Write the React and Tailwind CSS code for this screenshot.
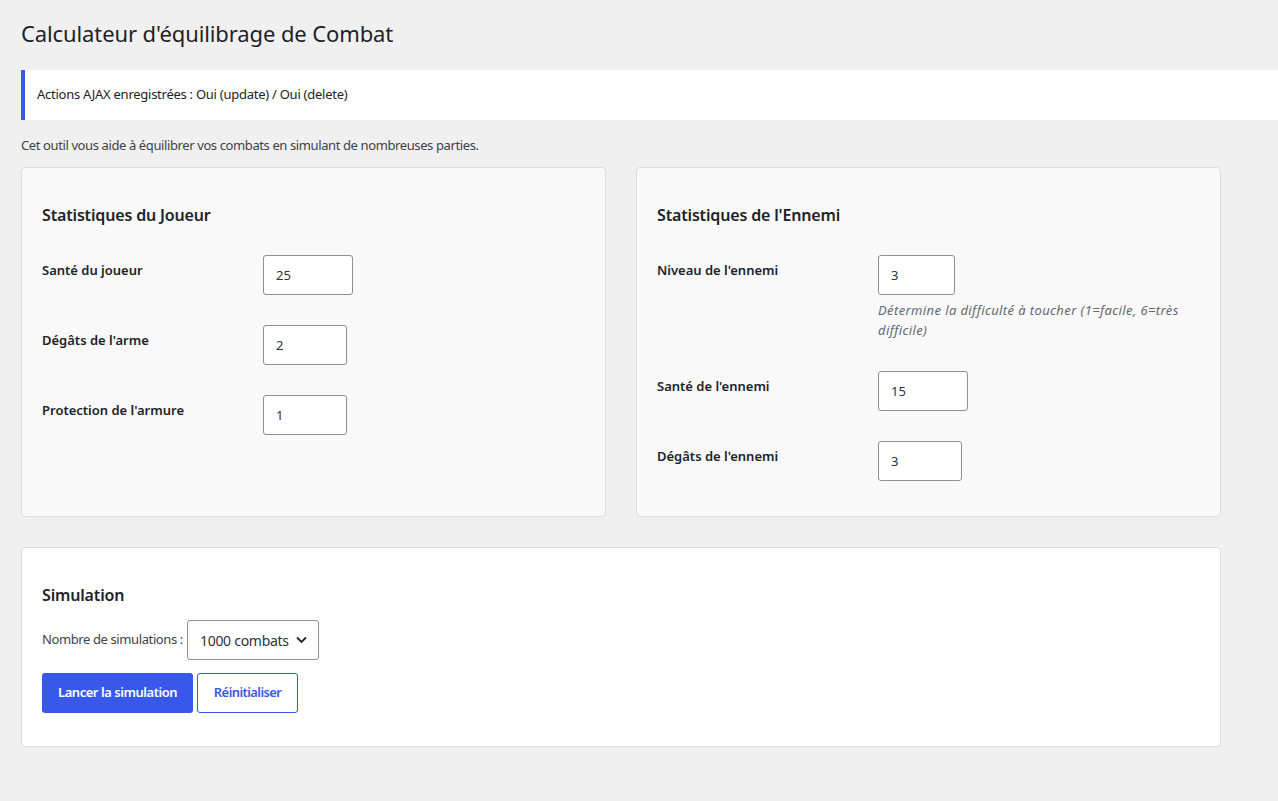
import React, { useState } from "react";

// Calculateur d'équilibrage — admin page (WP look)

const font = { fontFamily: '"Noto Sans", "Open Sans", sans-serif' };

function Field({ label, value, width, help }) {
  return (
    <div className="flex items-start">
      <div className="w-[221px] shrink-0 pt-[5px] text-[13px] leading-[20px] font-semibold text-[#1d2327]">
        {label}
      </div>
      <div>
        <input
          type="text"
          defaultValue={value}
          className={`h-[40px] ${width} rounded-[3px] border border-[#8c8f94] bg-white px-[12px] text-[13px] text-[#2c3338] outline-none`}
        />
        {help ? (
          <p className="mt-[5px] mb-[1px] max-w-[320px] text-[13px] leading-[20px] italic tracking-[0.03em] text-[#646970]">
            {help}
          </p>
        ) : null}
      </div>
    </div>
  );
}

export default function App() {
  const [count, setCount] = useState("1000");

  return (
    <div className="min-h-screen bg-[#f0f0f1] text-[#3c434a]" style={font}>
      <div className="pl-[21px] pt-[18px] pb-[40px]">
        <h1 className="text-[22px] leading-[30px] font-normal tracking-[-0.005em] text-[#1d2327]">
          Calculateur d'équilibrage de Combat
        </h1>

        {/* notice */}
        <div className="mt-[22px] flex h-[50px] items-center border-l-4 border-[#3858e9] bg-white pl-[12px] text-[13px] tracking-[-0.02em] text-[#1d2327]">
          Actions AJAX enregistrées : Oui (update) / Oui (delete)
        </div>

        <p className="mt-[15px] text-[13px] leading-[20px] tracking-[-0.03em]">
          Cet outil vous aide à équilibrer vos combats en simulant de nombreuses parties.
        </p>

        <div className="mt-[12px] grid w-[1200px] grid-cols-2 gap-[30px]">
          {/* player */}
          <div className="rounded-[4px] border border-[#dcdcde] bg-[#f9f9f9] px-[20px] pt-[35px] pb-[20px]">
            <h2 className="text-[16px] leading-[24px] font-semibold tracking-[-0.01em] text-[#1d2327]">
              Statistiques du Joueur
            </h2>
            <div className="mt-[28px] flex flex-col gap-[30px]">
              <Field label="Santé du joueur" value="25" width="w-[90px]" />
              <Field label="Dégâts de l'arme" value="2" width="w-[84px]" />
              <Field label="Protection de l'armure" value="1" width="w-[84px]" />
            </div>
          </div>

          {/* enemy */}
          <div className="rounded-[4px] border border-[#dcdcde] bg-[#f9f9f9] px-[20px] pt-[35px] pb-[35px]">
            <h2 className="text-[16px] leading-[24px] font-semibold tracking-[-0.01em] text-[#1d2327]">
              Statistiques de l'Ennemi
            </h2>
            <div className="mt-[28px] flex flex-col gap-[30px]">
              <Field
                label="Niveau de l'ennemi"
                value="3"
                width="w-[77px]"
                help="Détermine la difficulté à toucher (1=facile, 6=très difficile)"
              />
              <Field label="Santé de l'ennemi" value="15" width="w-[90px]" />
              <Field label="Dégâts de l'ennemi" value="3" width="w-[84px]" />
            </div>
          </div>
        </div>

        {/* simulation */}
        <div className="mt-[30px] w-[1200px] rounded-[4px] border border-[#dcdcde] bg-white px-[20px] pt-[35px] pb-[33px]">
          <h2 className="text-[16px] leading-[24px] font-semibold tracking-[-0.01em] text-[#1d2327]">
            Simulation
          </h2>
          <div className="mt-[13px] flex items-center gap-[4px] text-[13px]">
            <label className="tracking-[-0.03em] text-[#3c434a]">Nombre de simulations :</label>
            <div className="relative">
              <select
                value={count}
                onChange={(e) => setCount(e.target.value)}
                className="h-[40px] w-[132px] appearance-none rounded-[3px] border border-[#8c8f94] bg-white pl-[12px] pr-[28px] text-[14px] tracking-[-0.02em] text-[#2c3338] outline-none"
              >
                <option value="100">100 combats</option>
                <option value="1000">1000 combats</option>
                <option value="10000">10000 combats</option>
              </select>
              <svg
                className="pointer-events-none absolute right-[12px] top-[16px]"
                width="11"
                height="8"
                viewBox="0 0 11 8"
                fill="none"
              >
                <path d="M1 1.5 5.5 6 10 1.5" stroke="#1d2327" strokeWidth="1.8" />
              </svg>
            </div>
          </div>
          <div className="mt-[13px] flex gap-[4px]">
            <button
              type="button"
              className="h-[40px] rounded-[3px] bg-[#3858e9] px-[16px] text-[13px] font-semibold tracking-[-0.035em] text-white"
            >
              Lancer la simulation
            </button>
            <button
              type="button"
              className="h-[40px] w-[101px] rounded-[3px] border border-[#3858e9] bg-white text-[13px] font-semibold tracking-[-0.045em] text-[#3858e9]"
            >
              Réinitialiser
            </button>
          </div>
        </div>
      </div>
    </div>
  );
}
